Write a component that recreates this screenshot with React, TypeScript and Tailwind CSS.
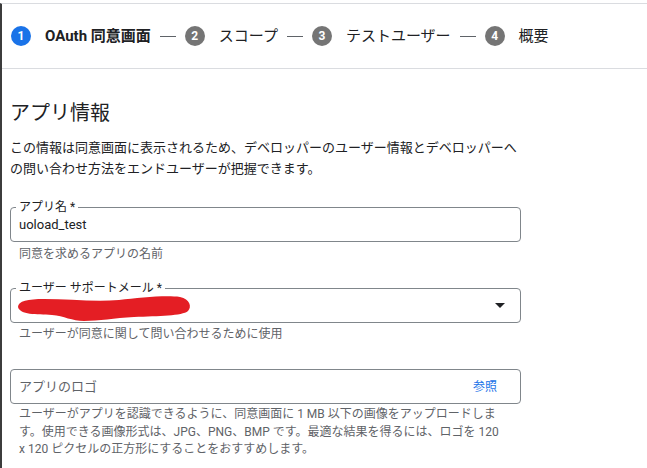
import React from 'react';

const font = { fontFamily: 'Roboto, "Noto Sans CJK JP", sans-serif' };

function Step({ n, label, active }: { n: number; label: string; active?: boolean }) {
    return (
        <div className="flex items-center">
            <div
                className={`w-[20px] h-[20px] rounded-full flex items-center justify-center text-white text-[12px] font-bold leading-none ${active ? 'bg-[#1a73e8]' : 'bg-[#757575]'}`}
            >
                {n}
            </div>
            <span className={`ml-[14px] text-[15px] text-[#202124] ${active ? 'font-bold' : ''}`}>{label}</span>
        </div>
    );
}

function Dash() {
    return <div className="mx-[9px] w-[16px] h-px bg-[#5f6368]" />;
}

function Field({ label, children }: { label?: string; children: React.ReactNode }) {
    return (
        <div className="relative h-[35px] border border-[#80868b] rounded-[4px] flex items-center pl-[8px] pr-[15px]">
            {label && (
                <span className="absolute -top-[9px] left-[5px] px-[3px] bg-white text-[12px] leading-[16px] text-[#202124]">
                    {label}
                </span>
            )}
            {children}
        </div>
    );
}

export default function App() {
    return (
        <div className="h-[468px] bg-white pt-[3px] overflow-hidden" style={font}>
            <div className="h-full border-t border-[#dadce0] border-l-2 border-l-[#3c3c3c]">
                <div className="h-[65px] border-b border-[#dadce0] flex items-center pl-[9px]">
                    <Step n={1} label="OAuth 同意画面" active />
                    <Dash />
                    <Step n={2} label="スコープ" />
                    <Dash />
                    <Step n={3} label="テストユーザー" />
                    <Dash />
                    <Step n={4} label="概要" />
                </div>

                <div className="w-[511px] ml-[8px]">
                    <h2 className="mt-[30px] text-[20px] leading-[28px] text-[#202124]">アプリ情報</h2>
                    <p className="mt-[10px] text-[13px] leading-[21px] text-[#202124]">
                        この情報は同意画面に表示されるため、デベロッパーのユーザー情報とデベロッパーへの問い合わせ方法をエンドユーザーが把握できます。
                    </p>

                    <div className="mt-[28px]">
                        <Field label="アプリ名 *">
                            <span className="text-[13px] text-[#202124]">uoload_test</span>
                        </Field>
                        <p className="mt-[4px] pl-[9px] text-[12px] leading-[16px] text-[#5f6368]">同意を求めるアプリの名前</p>
                    </div>

                    <div className="mt-[26px]">
                        <Field label="ユーザー サポートメール *">
                            <svg className="absolute left-[3px] top-[4px]" width="180" height="28" viewBox="0 0 180 28">
                                <path
                                    d="M4 14 C4 8 14 6 30 6 C55 6 80 9 105 7 C125 5 150 2 166 4 C176 6 178 14 174 18 C168 23 145 23 120 24 C100 25 85 28 70 28 C58 28 50 23 38 22 C22 21 6 22 4 14 Z"
                                    fill="#e41e24"
                                />
                            </svg>
                            <div className="flex-1" />
                            <svg width="10" height="5" viewBox="0 0 10 5">
                                <path d="M0 0 L10 0 L5 5 Z" fill="#202124" />
                            </svg>
                        </Field>
                        <p className="mt-[3px] pl-[9px] text-[12px] leading-[16px] text-[#5f6368]">ユーザーが同意に関して問い合わせるために使用</p>
                    </div>

                    <div className="mt-[27px]">
                        <Field>
                            <span className="flex-1 text-[13px] text-[#5f6368]">アプリのロゴ</span>
                            <span className="text-[12px] text-[#1a73e8] mr-[8px]">参照</span>
                        </Field>
                        <p className="mt-[2px] pl-[9px] pr-[22px] text-[12px] leading-[17.5px] text-[#5f6368]">
                            ユーザーがアプリを認識できるように、同意画面に 1 MB 以下の画像をアップロードします。使用できる画像形式は、JPG、PNG、BMP です。最適な結果を得るには、ロゴを 120 x 120 ピクセルの正方形にすることをおすすめします。
                        </p>
                    </div>
                </div>
            </div>
        </div>
    );
}
